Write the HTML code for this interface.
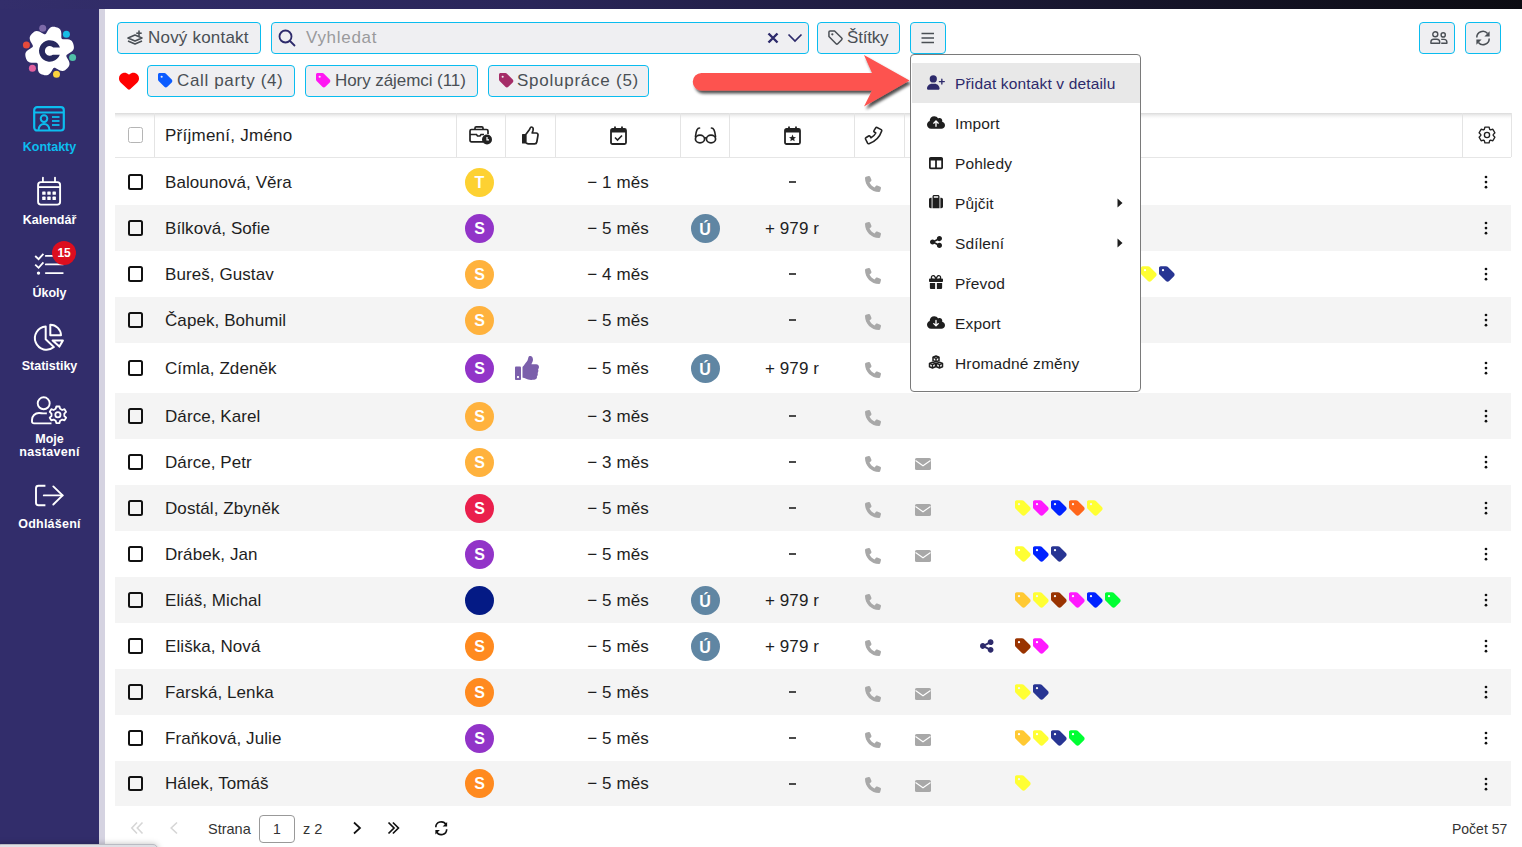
<!DOCTYPE html>
<html><head><meta charset="utf-8"><title>Kontakty</title>
<style>
html,body{margin:0;padding:0;}
body{width:1522px;height:847px;overflow:hidden;position:relative;background:#fff;font-family:"Liberation Sans", sans-serif;}
svg{overflow:visible}
</style></head><body>
<div style="position:absolute;left:0px;top:0px;width:1522px;height:9px;background:linear-gradient(to right,#332e6b 0%,#2a2659 35%,#16152a 75%,#0c0c12 100%)"></div><div style="position:absolute;left:0px;top:9px;width:99px;height:838px;background:#322d6b"></div><div style="position:absolute;left:99px;top:9px;width:6px;height:838px;background:#d5d3e1"></div><svg width="99" height="100" viewBox="0 0 99 100" style="position:absolute;left:0;top:0">
<path d="M72.40 51.00 L71.06 52.12 L69.49 53.09 L68.00 53.91 L66.87 54.67 L66.31 55.48 L66.39 56.46 L66.99 57.68 L67.87 59.14 L68.74 60.75 L69.35 62.40 L69.54 63.95 L69.30 65.31 L68.73 66.49 L67.95 67.52 L67.07 68.47 L66.12 69.35 L65.09 70.13 L63.91 70.70 L62.55 70.94 L61.00 70.75 L59.35 70.14 L57.74 69.27 L56.28 68.39 L55.06 67.79 L54.08 67.71 L53.27 68.27 L52.51 69.40 L51.69 70.89 L50.72 72.46 L49.60 73.80 L48.36 74.74 L47.05 75.22 L45.75 75.31 L44.47 75.15 L43.21 74.86 L41.97 74.48 L40.78 73.98 L39.69 73.25 L38.81 72.18 L38.20 70.75 L37.90 69.02 L37.84 67.18 L37.88 65.48 L37.79 64.12 L37.37 63.23 L36.48 62.81 L35.12 62.72 L33.42 62.76 L31.58 62.70 L29.85 62.40 L28.42 61.79 L27.35 60.91 L26.62 59.82 L26.12 58.63 L25.74 57.39 L25.45 56.13 L25.29 54.85 L25.38 53.55 L25.86 52.24 L26.80 51.00 L28.14 49.88 L29.71 48.91 L31.20 48.09 L32.33 47.33 L32.89 46.52 L32.81 45.54 L32.21 44.32 L31.33 42.86 L30.46 41.25 L29.85 39.60 L29.66 38.05 L29.90 36.69 L30.47 35.51 L31.25 34.48 L32.13 33.53 L33.08 32.65 L34.11 31.87 L35.29 31.30 L36.65 31.06 L38.20 31.25 L39.85 31.86 L41.46 32.73 L42.92 33.61 L44.14 34.21 L45.12 34.29 L45.93 33.73 L46.69 32.60 L47.51 31.11 L48.48 29.54 L49.60 28.20 L50.84 27.26 L52.15 26.78 L53.45 26.69 L54.73 26.85 L55.99 27.14 L57.23 27.52 L58.42 28.02 L59.51 28.75 L60.39 29.82 L61.00 31.25 L61.30 32.98 L61.36 34.82 L61.32 36.52 L61.41 37.88 L61.83 38.77 L62.72 39.19 L64.08 39.28 L65.78 39.24 L67.62 39.30 L69.35 39.60 L70.78 40.21 L71.85 41.09 L72.58 42.18 L73.08 43.37 L73.46 44.61 L73.75 45.87 L73.91 47.15 L73.82 48.45 L73.34 49.76Z" fill="#fff"/>
<circle cx="42.7" cy="28.2" r="3.5" fill="#7d6aa8"/>
<circle cx="66.4" cy="34.2" r="3.5" fill="#16bde6"/>
<circle cx="26.4" cy="44.9" r="3.5" fill="#e64a3b"/>
<circle cx="72.6" cy="57.6" r="3.5" fill="#4fbfa8"/>
<circle cx="32.4" cy="68.3" r="3.5" fill="#e0609e"/>
<circle cx="56.5" cy="74.3" r="3.5" fill="#fbd23e"/>
<path d="M59.96 47.6 A10.75 10.75 0 1 0 59.82 54.7 L52.82 54.7 A4.85 4.85 0 1 1 53.26 47.6 Z" fill="#27285e"/>
</svg><svg width="32" height="26" viewBox="0 0 32 26" style="position:absolute;left:33px;top:105.5px">
<rect x="1.2" y="1.2" width="29.6" height="23.3" rx="3" fill="none" stroke="#0cbdef" stroke-width="2.2"/>
<line x1="1.2" y1="6.5" x2="30.8" y2="6.5" stroke="#0cbdef" stroke-width="2"/>
<circle cx="11" cy="12.6" r="3.3" fill="none" stroke="#0cbdef" stroke-width="2"/>
<path d="M5.5 24 C6 19.5 8.5 18 11 18 C13.5 18 16 19.5 16.5 24" fill="none" stroke="#0cbdef" stroke-width="2"/>
<line x1="19" y1="11" x2="26.5" y2="11" stroke="#0cbdef" stroke-width="1.8"/>
<line x1="19" y1="15" x2="26.5" y2="15" stroke="#0cbdef" stroke-width="1.8"/>
<line x1="19" y1="19" x2="26.5" y2="19" stroke="#0cbdef" stroke-width="1.8"/>
</svg><div style="position:absolute;left:0px;top:141px;font-size:12.5px;line-height:1;color:#0cbdef;font-weight:bold;white-space:nowrap;width:99px;text-align:center">Kontakty</div><svg width="26" height="30" viewBox="0 0 26 30" style="position:absolute;left:36px;top:177px">
<rect x="2.1" y="5.1" width="22" height="22.5" rx="2.8" fill="none" stroke="#fff" stroke-width="1.9"/>
<line x1="2.1" y1="10.1" x2="24.1" y2="10.1" stroke="#fff" stroke-width="1.8"/>
<line x1="6.9" y1="0.6" x2="6.9" y2="5" stroke="#fff" stroke-width="1.8" stroke-linecap="round"/>
<line x1="19" y1="0.6" x2="19" y2="5" stroke="#fff" stroke-width="1.8" stroke-linecap="round"/>
<rect x="6.2" y="14.4" width="3.4" height="3.4" rx="0.6" fill="#fff"/><rect x="11.3" y="14.4" width="3.4" height="3.4" rx="0.6" fill="#fff"/><rect x="16.5" y="14.4" width="3.4" height="3.4" rx="0.6" fill="#fff"/><rect x="6.2" y="19.6" width="3.4" height="3.4" rx="0.6" fill="#fff"/><rect x="11.3" y="19.6" width="3.4" height="3.4" rx="0.6" fill="#fff"/><rect x="16.5" y="19.6" width="3.4" height="3.4" rx="0.6" fill="#fff"/>
</svg><div style="position:absolute;left:0px;top:214px;font-size:12.5px;line-height:1;color:#ffffff;font-weight:bold;white-space:nowrap;width:99px;text-align:center">Kalendář</div><svg width="30" height="24" viewBox="0 0 30 24" style="position:absolute;left:34px;top:252px">
<path d="M1.2 4 L4.6 7.2 L9.4 1.8" fill="none" stroke="#fff" stroke-width="1.8"/>
<path d="M1.2 12.6 L4.6 15.8 L9.4 10.4" fill="none" stroke="#fff" stroke-width="1.8"/>
<circle cx="4.5" cy="21.1" r="1.7" fill="#fff"/>
<line x1="11.8" y1="3.9" x2="28.8" y2="3.9" stroke="#fff" stroke-width="1.8" stroke-linecap="round"/>
<line x1="11.8" y1="12.4" x2="28.8" y2="12.4" stroke="#fff" stroke-width="1.8" stroke-linecap="round"/>
<line x1="11.8" y1="21.1" x2="28.8" y2="21.1" stroke="#fff" stroke-width="1.8" stroke-linecap="round"/>
</svg><div style="position:absolute;left:51.9px;top:241px;width:24px;height:24px;background:#dc0e1f;border-radius:50%"><div style="font-size:12px;line-height:24px;text-align:center;color:#fff;font-weight:bold;letter-spacing:-0.3px">15</div></div><div style="position:absolute;left:0px;top:287px;font-size:12.5px;line-height:1;color:#ffffff;font-weight:bold;white-space:nowrap;width:99px;text-align:center">Úkoly</div><svg width="30" height="30" viewBox="0 0 30 30" style="position:absolute;left:34px;top:323px">
<path d="M11.7 3.6 A11.6 11.6 0 1 0 19.9 24.1 L11.7 16.2 Z" fill="none" stroke="#fff" stroke-width="2" stroke-linejoin="round"/>
<path d="M16.3 1.8 V12.3 H27 A10.7 10.7 0 0 0 16.3 1.8 Z" fill="none" stroke="#fff" stroke-width="2" stroke-linejoin="round"/>
<path d="M18.6 17.4 H28.9 L25.4 23.6 Z" fill="none" stroke="#fff" stroke-width="2" stroke-linejoin="round"/>
</svg><div style="position:absolute;left:0px;top:360px;font-size:12.5px;line-height:1;color:#ffffff;font-weight:bold;white-space:nowrap;width:99px;text-align:center">Statistiky</div><svg width="36" height="28" viewBox="0 0 36 28" style="position:absolute;left:31px;top:397px">
<circle cx="12.7" cy="6.3" r="6" fill="none" stroke="#fff" stroke-width="1.9"/>
<path d="M20.5 26.4 H3 C1.8 26.4 1 25.6 1 24.4 V23 C1 19 4 16 8 16 C10.5 16 12.5 16.8 15.8 16.2" fill="none" stroke="#fff" stroke-width="1.9" stroke-linejoin="round"/>
<g transform="translate(26.9 17.8)">
<path d="M-1.6 -8.3 H1.6 L2.2 -6 L4.3 -4.8 L6.6 -5.6 L8.2 -2.9 L6.4 -1.2 V1.2 L8.2 2.9 L6.6 5.6 L4.3 4.8 L2.2 6 L1.6 8.3 H-1.6 L-2.2 6 L-4.3 4.8 L-6.6 5.6 L-8.2 2.9 L-6.4 1.2 V-1.2 L-8.2 -2.9 L-6.6 -5.6 L-4.3 -4.8 L-2.2 -6 Z" fill="none" stroke="#fff" stroke-width="1.8" stroke-linejoin="round"/>
<circle cx="0" cy="0" r="2.6" fill="none" stroke="#fff" stroke-width="1.8"/>
</g>
</svg><div style="position:absolute;left:0px;top:432.5px;font-size:12.5px;line-height:1;color:#ffffff;font-weight:bold;white-space:nowrap;width:99px;text-align:center">Moje</div><div style="position:absolute;left:0px;top:445.5px;font-size:12.5px;line-height:1;color:#ffffff;font-weight:bold;white-space:nowrap;width:99px;text-align:center;letter-spacing:0.3px">nastavení</div><svg width="30" height="24" viewBox="0 0 30 24" style="position:absolute;left:34px;top:484px">
<path d="M11.4 1.7 H4.5 C3 1.7 2 2.7 2 4.2 V18.7 C2 20.2 3 21.2 4.5 21.2 H11.4" fill="none" stroke="#fff" stroke-width="1.9"/>
<line x1="9.8" y1="11.4" x2="28.6" y2="11.4" stroke="#fff" stroke-width="1.9" stroke-linecap="round"/>
<path d="M19.3 2.4 L28.6 11.4 L19.3 20.5" fill="none" stroke="#fff" stroke-width="1.9" stroke-linecap="round" stroke-linejoin="round"/>
</svg><div style="position:absolute;left:0px;top:518px;font-size:12.5px;line-height:1;color:#ffffff;font-weight:bold;white-space:nowrap;width:99px;text-align:center;letter-spacing:0.25px">Odhlášení</div><div style="position:absolute;left:-4px;top:844px;width:160px;height:10px;background:#dfe0e5;border:1px solid #b9bbc2;border-radius:5px;box-shadow:0 0 6px rgba(0,0,0,.25)"></div><div style="position:absolute;left:117px;top:22px;width:144px;height:32px;box-sizing:border-box;border:1px solid #0abcef;background:#efeff2;border-radius:4px;"></div><svg width="16" height="16" viewBox="0 0 16 16" style="position:absolute;left:127px;top:30px">
<path d="M1 8 L8 5 L15 8 L8 11 Z" fill="none" stroke="#4a4f55" stroke-width="1.6" stroke-linejoin="round"/>
<path d="M1 11 L8 14 L15 11" fill="none" stroke="#4a4f55" stroke-width="1.6" stroke-linejoin="round"/>
<line x1="12" y1="0.5" x2="12" y2="6" stroke="#4a4f55" stroke-width="1.6"/><line x1="9.3" y1="3.2" x2="14.7" y2="3.2" stroke="#4a4f55" stroke-width="1.6"/>
</svg><div style="position:absolute;left:148px;top:29px;font-size:17px;line-height:1;color:#4a4f55;font-weight:normal;white-space:nowrap;letter-spacing:0.2px">Nový kontakt</div><div style="position:absolute;left:271px;top:22px;width:538px;height:32px;box-sizing:border-box;border:1px solid #0abcef;background:#efeff2;border-radius:4px;"></div><svg width="18" height="18" viewBox="0 0 18 18" style="position:absolute;left:278px;top:29px">
<circle cx="7.5" cy="7.5" r="6" fill="none" stroke="#2d2a6b" stroke-width="1.8"/>
<line x1="12" y1="12" x2="17" y2="17" stroke="#2d2a6b" stroke-width="1.8"/>
</svg><div style="position:absolute;left:306px;top:29px;font-size:17px;line-height:1;color:#9a9a9c;font-weight:normal;white-space:nowrap;letter-spacing:0.7px">Vyhledat</div><svg width="12" height="12" viewBox="0 0 12 12" style="position:absolute;left:767px;top:32px">
<path d="M1.5 1.5 L10.5 10.5 M10.5 1.5 L1.5 10.5" stroke="#2d2a6b" stroke-width="2.4"/>
</svg><svg width="16" height="10" viewBox="0 0 16 10" style="position:absolute;left:787px;top:33px">
<path d="M1.5 1.5 L8 8 L14.5 1.5" fill="none" stroke="#2d2a6b" stroke-width="1.7"/>
</svg><div style="position:absolute;left:817px;top:22px;width:83px;height:32px;box-sizing:border-box;border:1px solid #0abcef;background:#efeff2;border-radius:4px;"></div><svg width="15" height="15" viewBox="0 0 16 16" style="position:absolute;left:827.8px;top:30.2px">
<path d="M1 2.2 C1 1.5 1.5 1 2.2 1 H7 L14.6 8.6 C15.1 9.1 15.1 9.9 14.6 10.4 L10.4 14.6 C9.9 15.1 9.1 15.1 8.6 14.6 L1 7 Z" fill="none" stroke="#4a4f55" stroke-width="1.6" stroke-linejoin="round"/>
<circle cx="4.6" cy="4.6" r="1.2" fill="#4a4f55"/>
</svg><div style="position:absolute;left:847px;top:29px;font-size:17px;line-height:1;color:#4a4f55;font-weight:normal;white-space:nowrap;letter-spacing:-0.2px">Štítky</div><div style="position:absolute;left:910px;top:22px;width:36px;height:32px;box-sizing:border-box;border:1px solid #0abcef;background:#efeff2;border-radius:4px;"></div><svg width="14" height="12" viewBox="0 0 14 12" style="position:absolute;left:921px;top:31.5px">
<path d="M0.5 1.5 H13 M0.5 6 H13 M0.5 10.5 H13" stroke="#4a4f55" stroke-width="1.7"/>
</svg><div style="position:absolute;left:1419px;top:22px;width:36px;height:32px;box-sizing:border-box;border:1px solid #0abcef;background:#efeff2;border-radius:4px;"></div><svg width="18" height="14" viewBox="0 0 18 14" style="position:absolute;left:1429.5px;top:30.8px">
<circle cx="5.3" cy="3.3" r="2.5" fill="none" stroke="#4a4f55" stroke-width="1.4"/>
<path d="M0.9 12.3 V11 C0.9 9.4 2.1 8.2 3.7 8.2 H6.9 C8.5 8.2 9.7 9.4 9.7 11 V12.3 Z" fill="none" stroke="#4a4f55" stroke-width="1.4" stroke-linejoin="round"/>
<circle cx="13.2" cy="3.9" r="2.1" fill="none" stroke="#4a4f55" stroke-width="1.4"/>
<path d="M11.2 8.4 H14 C15.6 8.4 16.9 9.6 16.9 11.2 V12.3 H11.2" fill="none" stroke="#4a4f55" stroke-width="1.4" stroke-linejoin="round"/>
</svg><div style="position:absolute;left:1465px;top:22px;width:36px;height:32px;box-sizing:border-box;border:1px solid #0abcef;background:#efeff2;border-radius:4px;"></div><svg width="16" height="16" viewBox="0 0 16 16" style="position:absolute;left:1475px;top:29.8px">
<path d="M1.8 7.6 A6.1 6.1 0 0 1 12.6 3.6" fill="none" stroke="#4a4f55" stroke-width="1.5"/>
<path d="M14.2 8.4 A6.1 6.1 0 0 1 3.4 12.4" fill="none" stroke="#4a4f55" stroke-width="1.5"/>
<path d="M14.6 1.2 V6.4 H9.4 Z" fill="#4a4f55"/>
<path d="M1.4 14.8 V9.6 H6.6 Z" fill="#4a4f55"/>
</svg><div style="position:absolute;left:119px;top:71.3px"><svg width="20" height="20" viewBox="0 0 512 512" style="display:block" ><path d="M47.6 300.4L228.3 469.1c7.5 7 17.4 10.9 27.7 10.9s20.2-3.9 27.7-10.9L464.4 300.4c30.4-28.3 47.6-68 47.6-109.5v-5.8c0-69.9-50.5-129.5-119.4-141C347 36.5 300.6 51.4 268 84L256 96 244 84c-32.6-32.6-79-47.5-124.6-39.9C50.5 55.6 0 115.2 0 185.1v5.8c0 41.5 17.2 81.2 47.6 109.5z" fill="#ff0000"/></svg></div><div style="position:absolute;left:147px;top:65px;width:148px;height:32px;box-sizing:border-box;border:1px solid #0abcef;background:#efeff2;border-radius:4px;"></div><div style="position:absolute;left:158px;top:72.2px"><svg width="14.7" height="16.8" viewBox="0 0 448 512" style="display:block" ><path d="M0 80V229.5c0 17 6.7 33.3 18.7 45.3l176 176c25 25 65.5 25 90.5 0L418.7 317.3c25-25 25-65.5 0-90.5l-176-176c-12-12-28.3-18.7-45.3-18.7H48C21.5 32 0 53.5 0 80zm112 32a32 32 0 1 1 0 64 32 32 0 1 1 0-64z" fill="#0c5cff"/></svg></div><div style="position:absolute;left:177px;top:72px;font-size:17px;line-height:1;color:#4a4f55;font-weight:normal;white-space:nowrap;letter-spacing:0.65px">Call party (4)</div><div style="position:absolute;left:305px;top:65px;width:173px;height:32px;box-sizing:border-box;border:1px solid #0abcef;background:#efeff2;border-radius:4px;"></div><div style="position:absolute;left:316px;top:72.2px"><svg width="14.7" height="16.8" viewBox="0 0 448 512" style="display:block" ><path d="M0 80V229.5c0 17 6.7 33.3 18.7 45.3l176 176c25 25 65.5 25 90.5 0L418.7 317.3c25-25 25-65.5 0-90.5l-176-176c-12-12-28.3-18.7-45.3-18.7H48C21.5 32 0 53.5 0 80zm112 32a32 32 0 1 1 0 64 32 32 0 1 1 0-64z" fill="#ff17f2"/></svg></div><div style="position:absolute;left:335px;top:72px;font-size:17px;line-height:1;color:#4a4f55;font-weight:normal;white-space:nowrap;letter-spacing:-0.07px">Hory zájemci (11)</div><div style="position:absolute;left:488px;top:65px;width:161px;height:32px;box-sizing:border-box;border:1px solid #0abcef;background:#efeff2;border-radius:4px;"></div><div style="position:absolute;left:499px;top:72.2px"><svg width="14.7" height="16.8" viewBox="0 0 448 512" style="display:block" ><path d="M0 80V229.5c0 17 6.7 33.3 18.7 45.3l176 176c25 25 65.5 25 90.5 0L418.7 317.3c25-25 25-65.5 0-90.5l-176-176c-12-12-28.3-18.7-45.3-18.7H48C21.5 32 0 53.5 0 80zm112 32a32 32 0 1 1 0 64 32 32 0 1 1 0-64z" fill="#a52d68"/></svg></div><div style="position:absolute;left:517px;top:72px;font-size:17px;line-height:1;color:#4a4f55;font-weight:normal;white-space:nowrap;letter-spacing:0.75px">Spolupráce (5)</div><div style="position:absolute;left:115px;top:113px;width:1396px;height:44px;background:linear-gradient(to bottom,#dadada 0px,#ececec 2px,#f8f8f8 4px,#fff 6px)"></div><div style="position:absolute;left:115px;top:156.8px;width:1396px;height:1.5px;background:#e6e6e6"></div><div style="position:absolute;left:154px;top:113px;width:1px;height:44px;background:#e4e4e4"></div><div style="position:absolute;left:456px;top:113px;width:1px;height:44px;background:#e4e4e4"></div><div style="position:absolute;left:505px;top:113px;width:1px;height:44px;background:#e4e4e4"></div><div style="position:absolute;left:555px;top:113px;width:1px;height:44px;background:#e4e4e4"></div><div style="position:absolute;left:680px;top:113px;width:1px;height:44px;background:#e4e4e4"></div><div style="position:absolute;left:729px;top:113px;width:1px;height:44px;background:#e4e4e4"></div><div style="position:absolute;left:854px;top:113px;width:1px;height:44px;background:#e4e4e4"></div><div style="position:absolute;left:904px;top:113px;width:1px;height:44px;background:#e4e4e4"></div><div style="position:absolute;left:1462px;top:113px;width:1px;height:44px;background:#e4e4e4"></div><div style="position:absolute;left:1511px;top:113px;width:1px;height:44px;background:#e4e4e4"></div><div style="position:absolute;left:127.5px;top:127px;width:15.5px;height:15.5px;box-sizing:border-box;border:1px solid #b5b5b5;border-radius:2.5px;background:#fff"></div><div style="position:absolute;left:165px;top:127px;font-size:17px;line-height:1;color:#1e1e1e;font-weight:normal;white-space:nowrap;letter-spacing:0.25px">Příjmení, Jméno</div><svg width="24" height="19" viewBox="0 0 24 19" style="position:absolute;left:469px;top:126px">
<path d="M6 3.5 V2 C6 1.3 6.5 0.8 7.2 0.8 H12.8 C13.5 0.8 14 1.3 14 2 V3.5" fill="none" stroke="#222" stroke-width="1.7"/>
<path d="M14 15.8 H2.5 C1.6 15.8 1 15.2 1 14.3 V5 C1 4.1 1.6 3.5 2.5 3.5 H17.5 C18.4 3.5 19 4.1 19 5 V8" fill="none" stroke="#222" stroke-width="1.7"/>
<path d="M1 8.5 H7.5 L8.5 10 H11 L12 8.5 H15" fill="none" stroke="#222" stroke-width="1.6"/>
<circle cx="18" cy="13.5" r="5" fill="#222"/>
<path d="M18 11 V13.8 H20" fill="none" stroke="#fff" stroke-width="1.2"/>
</svg><svg width="18" height="19" viewBox="0 0 18 19" style="position:absolute;left:521px;top:126px">
<rect x="1" y="8" width="3.2" height="9.5" fill="#222" rx="0.5"/>
<path d="M4.8 8.5 L8.5 3.5 C9 2.5 9.2 1 10.5 1 C12 1 12.5 2.5 12 4.5 L11.2 7 H15.3 C16.5 7 17.2 8 17 9.2 L15.8 16 C15.6 17.2 14.8 17.8 13.6 17.8 H7.5 C6.2 17.8 5.5 17.2 4.8 16.8 Z" fill="none" stroke="#222" stroke-width="1.7" stroke-linejoin="round"/>
</svg><svg width="17" height="19" viewBox="0 0 17 19" style="position:absolute;left:609.5px;top:125.5px">
<rect x="1" y="3" width="15" height="15" rx="1.5" fill="none" stroke="#222" stroke-width="1.8"/>
<rect x="1" y="3" width="15" height="3.5" fill="#222"/>
<line x1="5" y1="0.5" x2="5" y2="4" stroke="#222" stroke-width="1.8"/>
<line x1="12" y1="0.5" x2="12" y2="4" stroke="#222" stroke-width="1.8"/>
<path d="M5 11.5 L7.5 14 L12 9.5" fill="none" stroke="#222" stroke-width="1.6"/>
</svg><svg width="17" height="19" viewBox="0 0 17 19" style="position:absolute;left:784px;top:125.5px">
<rect x="1" y="3" width="15" height="15" rx="1.5" fill="none" stroke="#222" stroke-width="1.8"/>
<rect x="1" y="3" width="15" height="3.5" fill="#222"/>
<line x1="5" y1="0.5" x2="5" y2="4" stroke="#222" stroke-width="1.8"/>
<line x1="12" y1="0.5" x2="12" y2="4" stroke="#222" stroke-width="1.8"/>
<path d="M8.5 8.5 L9.5 11 L12 11.2 L10.1 12.8 L10.7 15.3 L8.5 14 L6.3 15.3 L6.9 12.8 L5 11.2 L7.5 11 Z" fill="#222"/>
</svg><svg width="23" height="17" viewBox="0 0 23 17" style="position:absolute;left:694px;top:127px">
<path d="M5.5 1 C3 1 2 4 1.5 9.5" fill="none" stroke="#222" stroke-width="1.7" stroke-linecap="round"/>
<path d="M17.5 1 C20 1 21 4 21.5 9.5" fill="none" stroke="#222" stroke-width="1.7" stroke-linecap="round"/>
<ellipse cx="6" cy="12" rx="4.6" ry="3.8" fill="none" stroke="#222" stroke-width="1.7"/>
<ellipse cx="17" cy="12" rx="4.6" ry="3.8" fill="none" stroke="#222" stroke-width="1.7"/>
<path d="M10.6 11.5 C11 10.5 12 10.5 12.4 11.5" fill="none" stroke="#222" stroke-width="1.5"/>
</svg><svg width="19" height="19" viewBox="0 0 19 19" style="position:absolute;left:864px;top:125.5px">
<path d="M13 1.5 L17.2 3.6 C17.7 3.9 17.9 4.5 17.7 5 C15.5 11.5 11.5 15.5 5 17.7 C4.5 17.9 3.9 17.7 3.6 17.2 L1.5 13 C1.3 12.5 1.4 12 1.9 11.7 L4.6 10 C5.1 9.7 5.7 9.8 6 10.3 L7 11.8 C9.5 10.5 10.5 9.5 11.8 7 L10.3 6 C9.8 5.7 9.7 5.1 10 4.6 L11.7 1.9 C12 1.4 12.5 1.3 13 1.5 Z" fill="none" stroke="#222" stroke-width="1.6" stroke-linejoin="round"/>
</svg><svg width="19" height="19" viewBox="0 0 19 19" style="position:absolute;left:1477.5px;top:126px">
<path d="M15.19 9.39 L16.90 11.21 L14.86 14.74 L12.43 14.16 L11.76 14.55 L11.04 16.94 L6.96 16.94 L6.24 14.55 L5.57 14.16 L3.14 14.74 L1.10 11.21 L2.81 9.39 L2.81 8.61 L1.10 6.79 L3.14 3.26 L5.57 3.84 L6.24 3.45 L6.96 1.06 L11.04 1.06 L11.76 3.45 L12.43 3.84 L14.86 3.26 L16.90 6.79 L15.19 8.61Z" fill="none" stroke="#222" stroke-width="1.35" stroke-linejoin="round"/>
<circle cx="9.0" cy="9.0" r="2.6" fill="none" stroke="#222" stroke-width="1.35"/>
</svg><div style="position:absolute;left:115px;top:158.5px;width:1396px;height:46.5px;background:#ffffff"></div><div style="position:absolute;left:127.5px;top:174.3px;width:15.5px;height:15.5px;box-sizing:border-box;border:2px solid #111;border-radius:2.5px"></div><div style="position:absolute;left:165px;top:173.5px;font-size:17px;line-height:1;color:#1e1e1e;font-weight:normal;white-space:nowrap;letter-spacing:0.08px">Balounová, Věra</div><div style="position:absolute;left:465px;top:167.5px;width:29px;height:29px;background:#fdd132;border-radius:50%"><div style="font-size:16px;line-height:29px;text-align:center;color:#fff;font-weight:bold">T</div></div><div style="position:absolute;left:586px;top:173.5px;font-size:17px;line-height:1;color:#1e1e1e;font-weight:normal;white-space:nowrap;width:64px;text-align:center;letter-spacing:0.1px">− 1 měs</div><div style="position:absolute;left:789px;top:181px;width:6.6px;height:2px;background:#4a4a4a"></div><div style="position:absolute;left:865px;top:175.5px"><svg width="16" height="16" viewBox="0 0 512 512" style="display:block" ><path d="M164.9 24.6c-7.7-18.6-28-28.5-47.4-23.2l-88 24C12.1 30.2 0 46 0 64C0 311.4 200.6 512 448 512c18 0 33.8-12.1 38.6-29.5l24-88c5.3-19.4-4.6-39.7-23.2-47.4l-96-40c-16.3-6.8-35.2-2.1-46.3 11.6L304.7 368C234.3 334.7 177.3 277.7 144 207.3L193.3 167c13.7-11.2 18.4-30 11.6-46.3l-40-96z" fill="#a8a8a8"/></svg></div><svg width="4" height="14" viewBox="0 0 4 14" style="position:absolute;left:1484px;top:175px">
<circle cx="2" cy="2" r="1.35" fill="#111"/><circle cx="2" cy="7.1" r="1.35" fill="#111"/><circle cx="2" cy="12.2" r="1.35" fill="#111"/></svg><div style="position:absolute;left:115px;top:205px;width:1396px;height:46px;background:#f4f4f4"></div><div style="position:absolute;left:127.5px;top:220.3px;width:15.5px;height:15.5px;box-sizing:border-box;border:2px solid #111;border-radius:2.5px"></div><div style="position:absolute;left:165px;top:219.5px;font-size:17px;line-height:1;color:#1e1e1e;font-weight:normal;white-space:nowrap;letter-spacing:0.08px">Bílková, Sofie</div><div style="position:absolute;left:465px;top:213.5px;width:29px;height:29px;background:#9234c8;border-radius:50%"><div style="font-size:16px;line-height:29px;text-align:center;color:#fff;font-weight:bold">S</div></div><div style="position:absolute;left:586px;top:219.5px;font-size:17px;line-height:1;color:#1e1e1e;font-weight:normal;white-space:nowrap;width:64px;text-align:center;letter-spacing:0.1px">− 5 měs</div><div style="position:absolute;left:690.5px;top:213.5px;width:29px;height:29px;background:#6086a3;border-radius:50%"><div style="font-size:16px;line-height:31px;text-align:center;color:#fff;font-weight:bold">Ú</div></div><div style="position:absolute;left:752px;top:219.5px;font-size:17px;line-height:1;color:#1e1e1e;font-weight:normal;white-space:nowrap;width:80px;text-align:center;letter-spacing:0.1px">+ 979 r</div><div style="position:absolute;left:865px;top:221.5px"><svg width="16" height="16" viewBox="0 0 512 512" style="display:block" ><path d="M164.9 24.6c-7.7-18.6-28-28.5-47.4-23.2l-88 24C12.1 30.2 0 46 0 64C0 311.4 200.6 512 448 512c18 0 33.8-12.1 38.6-29.5l24-88c5.3-19.4-4.6-39.7-23.2-47.4l-96-40c-16.3-6.8-35.2-2.1-46.3 11.6L304.7 368C234.3 334.7 177.3 277.7 144 207.3L193.3 167c13.7-11.2 18.4-30 11.6-46.3l-40-96z" fill="#a8a8a8"/></svg></div><svg width="4" height="14" viewBox="0 0 4 14" style="position:absolute;left:1484px;top:221.0px">
<circle cx="2" cy="2" r="1.35" fill="#111"/><circle cx="2" cy="7.1" r="1.35" fill="#111"/><circle cx="2" cy="12.2" r="1.35" fill="#111"/></svg><div style="position:absolute;left:115px;top:251px;width:1396px;height:46px;background:#ffffff"></div><div style="position:absolute;left:127.5px;top:266.3px;width:15.5px;height:15.5px;box-sizing:border-box;border:2px solid #111;border-radius:2.5px"></div><div style="position:absolute;left:165px;top:265.5px;font-size:17px;line-height:1;color:#1e1e1e;font-weight:normal;white-space:nowrap;letter-spacing:0.08px">Bureš, Gustav</div><div style="position:absolute;left:465px;top:259.5px;width:29px;height:29px;background:#ffb23d;border-radius:50%"><div style="font-size:16px;line-height:29px;text-align:center;color:#fff;font-weight:bold">S</div></div><div style="position:absolute;left:586px;top:265.5px;font-size:17px;line-height:1;color:#1e1e1e;font-weight:normal;white-space:nowrap;width:64px;text-align:center;letter-spacing:0.1px">− 4 měs</div><div style="position:absolute;left:789px;top:273px;width:6.6px;height:2px;background:#4a4a4a"></div><div style="position:absolute;left:865px;top:267.5px"><svg width="16" height="16" viewBox="0 0 512 512" style="display:block" ><path d="M164.9 24.6c-7.7-18.6-28-28.5-47.4-23.2l-88 24C12.1 30.2 0 46 0 64C0 311.4 200.6 512 448 512c18 0 33.8-12.1 38.6-29.5l24-88c5.3-19.4-4.6-39.7-23.2-47.4l-96-40c-16.3-6.8-35.2-2.1-46.3 11.6L304.7 368C234.3 334.7 177.3 277.7 144 207.3L193.3 167c13.7-11.2 18.4-30 11.6-46.3l-40-96z" fill="#a8a8a8"/></svg></div><div style="position:absolute;left:1141.1499999999999px;top:264.7px"><svg width="16" height="18.3" viewBox="0 0 448 512" style="display:block" ><path d="M0 80V229.5c0 17 6.7 33.3 18.7 45.3l176 176c25 25 65.5 25 90.5 0L418.7 317.3c25-25 25-65.5 0-90.5l-176-176c-12-12-28.3-18.7-45.3-18.7H48C21.5 32 0 53.5 0 80zm112 32a32 32 0 1 1 0 64 32 32 0 1 1 0-64z" fill="#ffff33"/></svg></div><div style="position:absolute;left:1159.2px;top:264.7px"><svg width="16" height="18.3" viewBox="0 0 448 512" style="display:block" ><path d="M0 80V229.5c0 17 6.7 33.3 18.7 45.3l176 176c25 25 65.5 25 90.5 0L418.7 317.3c25-25 25-65.5 0-90.5l-176-176c-12-12-28.3-18.7-45.3-18.7H48C21.5 32 0 53.5 0 80zm112 32a32 32 0 1 1 0 64 32 32 0 1 1 0-64z" fill="#283593"/></svg></div><svg width="4" height="14" viewBox="0 0 4 14" style="position:absolute;left:1484px;top:267.0px">
<circle cx="2" cy="2" r="1.35" fill="#111"/><circle cx="2" cy="7.1" r="1.35" fill="#111"/><circle cx="2" cy="12.2" r="1.35" fill="#111"/></svg><div style="position:absolute;left:115px;top:297px;width:1396px;height:46px;background:#f4f4f4"></div><div style="position:absolute;left:127.5px;top:312.3px;width:15.5px;height:15.5px;box-sizing:border-box;border:2px solid #111;border-radius:2.5px"></div><div style="position:absolute;left:165px;top:311.5px;font-size:17px;line-height:1;color:#1e1e1e;font-weight:normal;white-space:nowrap;letter-spacing:0.08px">Čapek, Bohumil</div><div style="position:absolute;left:465px;top:305.5px;width:29px;height:29px;background:#ffb23d;border-radius:50%"><div style="font-size:16px;line-height:29px;text-align:center;color:#fff;font-weight:bold">S</div></div><div style="position:absolute;left:586px;top:311.5px;font-size:17px;line-height:1;color:#1e1e1e;font-weight:normal;white-space:nowrap;width:64px;text-align:center;letter-spacing:0.1px">− 5 měs</div><div style="position:absolute;left:789px;top:319px;width:6.6px;height:2px;background:#4a4a4a"></div><div style="position:absolute;left:865px;top:313.5px"><svg width="16" height="16" viewBox="0 0 512 512" style="display:block" ><path d="M164.9 24.6c-7.7-18.6-28-28.5-47.4-23.2l-88 24C12.1 30.2 0 46 0 64C0 311.4 200.6 512 448 512c18 0 33.8-12.1 38.6-29.5l24-88c5.3-19.4-4.6-39.7-23.2-47.4l-96-40c-16.3-6.8-35.2-2.1-46.3 11.6L304.7 368C234.3 334.7 177.3 277.7 144 207.3L193.3 167c13.7-11.2 18.4-30 11.6-46.3l-40-96z" fill="#a8a8a8"/></svg></div><svg width="4" height="14" viewBox="0 0 4 14" style="position:absolute;left:1484px;top:313.0px">
<circle cx="2" cy="2" r="1.35" fill="#111"/><circle cx="2" cy="7.1" r="1.35" fill="#111"/><circle cx="2" cy="12.2" r="1.35" fill="#111"/></svg><div style="position:absolute;left:115px;top:343px;width:1396px;height:50px;background:#ffffff"></div><div style="position:absolute;left:127.5px;top:360.3px;width:15.5px;height:15.5px;box-sizing:border-box;border:2px solid #111;border-radius:2.5px"></div><div style="position:absolute;left:165px;top:359.5px;font-size:17px;line-height:1;color:#1e1e1e;font-weight:normal;white-space:nowrap;letter-spacing:0.08px">Címla, Zdeněk</div><div style="position:absolute;left:465px;top:353.5px;width:29px;height:29px;background:#9234c8;border-radius:50%"><div style="font-size:16px;line-height:29px;text-align:center;color:#fff;font-weight:bold">S</div></div><div style="position:absolute;left:514.5px;top:355.5px"><svg width="24" height="24" viewBox="0 0 512 512" style="display:block" ><path d="M104 224H24c-13.255 0-24 10.745-24 24v240c0 13.255 10.745 24 24 24h80c13.255 0 24-10.745 24-24V248c0-13.255-10.745-24-24-24zM64 472c-13.255 0-24-10.745-24-24s10.745-24 24-24 24 10.745 24 24-10.745 24-24 24zM384 81.452c0 42.416-25.97 66.208-33.277 94.548h101.723c33.397 0 59.397 27.746 59.553 58.098.084 17.938-7.546 37.249-19.439 49.197l-.11.11c9.836 23.337 8.237 56.037-9.308 79.469 8.681 25.895-.069 57.704-16.382 74.757 4.298 17.598 2.244 32.575-6.148 44.632C440.202 511.587 389.616 512 346.839 512l-2.845-.001c-48.287-.017-87.806-17.598-119.56-31.725-15.957-7.099-36.821-15.887-52.651-16.178-6.54-.12-11.783-5.457-11.783-11.998v-213.77c0-3.2 1.282-6.271 3.558-8.521 39.614-39.144 56.648-80.587 89.117-113.111 14.804-14.832 20.188-37.236 25.393-58.902C282.515 39.293 291.817 0 312 0c24 0 72 8 72 81.452z" fill="#7b5fab"/></svg></div><div style="position:absolute;left:586px;top:359.5px;font-size:17px;line-height:1;color:#1e1e1e;font-weight:normal;white-space:nowrap;width:64px;text-align:center;letter-spacing:0.1px">− 5 měs</div><div style="position:absolute;left:690.5px;top:353.5px;width:29px;height:29px;background:#6086a3;border-radius:50%"><div style="font-size:16px;line-height:31px;text-align:center;color:#fff;font-weight:bold">Ú</div></div><div style="position:absolute;left:752px;top:359.5px;font-size:17px;line-height:1;color:#1e1e1e;font-weight:normal;white-space:nowrap;width:80px;text-align:center;letter-spacing:0.1px">+ 979 r</div><div style="position:absolute;left:865px;top:361.5px"><svg width="16" height="16" viewBox="0 0 512 512" style="display:block" ><path d="M164.9 24.6c-7.7-18.6-28-28.5-47.4-23.2l-88 24C12.1 30.2 0 46 0 64C0 311.4 200.6 512 448 512c18 0 33.8-12.1 38.6-29.5l24-88c5.3-19.4-4.6-39.7-23.2-47.4l-96-40c-16.3-6.8-35.2-2.1-46.3 11.6L304.7 368C234.3 334.7 177.3 277.7 144 207.3L193.3 167c13.7-11.2 18.4-30 11.6-46.3l-40-96z" fill="#a8a8a8"/></svg></div><svg width="4" height="14" viewBox="0 0 4 14" style="position:absolute;left:1484px;top:361.0px">
<circle cx="2" cy="2" r="1.35" fill="#111"/><circle cx="2" cy="7.1" r="1.35" fill="#111"/><circle cx="2" cy="12.2" r="1.35" fill="#111"/></svg><div style="position:absolute;left:115px;top:393px;width:1396px;height:46px;background:#f4f4f4"></div><div style="position:absolute;left:127.5px;top:408.3px;width:15.5px;height:15.5px;box-sizing:border-box;border:2px solid #111;border-radius:2.5px"></div><div style="position:absolute;left:165px;top:407.5px;font-size:17px;line-height:1;color:#1e1e1e;font-weight:normal;white-space:nowrap;letter-spacing:0.08px">Dárce, Karel</div><div style="position:absolute;left:465px;top:401.5px;width:29px;height:29px;background:#ffb23d;border-radius:50%"><div style="font-size:16px;line-height:29px;text-align:center;color:#fff;font-weight:bold">S</div></div><div style="position:absolute;left:586px;top:407.5px;font-size:17px;line-height:1;color:#1e1e1e;font-weight:normal;white-space:nowrap;width:64px;text-align:center;letter-spacing:0.1px">− 3 měs</div><div style="position:absolute;left:789px;top:415px;width:6.6px;height:2px;background:#4a4a4a"></div><div style="position:absolute;left:865px;top:409.5px"><svg width="16" height="16" viewBox="0 0 512 512" style="display:block" ><path d="M164.9 24.6c-7.7-18.6-28-28.5-47.4-23.2l-88 24C12.1 30.2 0 46 0 64C0 311.4 200.6 512 448 512c18 0 33.8-12.1 38.6-29.5l24-88c5.3-19.4-4.6-39.7-23.2-47.4l-96-40c-16.3-6.8-35.2-2.1-46.3 11.6L304.7 368C234.3 334.7 177.3 277.7 144 207.3L193.3 167c13.7-11.2 18.4-30 11.6-46.3l-40-96z" fill="#a8a8a8"/></svg></div><svg width="4" height="14" viewBox="0 0 4 14" style="position:absolute;left:1484px;top:409.0px">
<circle cx="2" cy="2" r="1.35" fill="#111"/><circle cx="2" cy="7.1" r="1.35" fill="#111"/><circle cx="2" cy="12.2" r="1.35" fill="#111"/></svg><div style="position:absolute;left:115px;top:439px;width:1396px;height:46px;background:#ffffff"></div><div style="position:absolute;left:127.5px;top:454.3px;width:15.5px;height:15.5px;box-sizing:border-box;border:2px solid #111;border-radius:2.5px"></div><div style="position:absolute;left:165px;top:453.5px;font-size:17px;line-height:1;color:#1e1e1e;font-weight:normal;white-space:nowrap;letter-spacing:0.08px">Dárce, Petr</div><div style="position:absolute;left:465px;top:447.5px;width:29px;height:29px;background:#ffb23d;border-radius:50%"><div style="font-size:16px;line-height:29px;text-align:center;color:#fff;font-weight:bold">S</div></div><div style="position:absolute;left:586px;top:453.5px;font-size:17px;line-height:1;color:#1e1e1e;font-weight:normal;white-space:nowrap;width:64px;text-align:center;letter-spacing:0.1px">− 3 měs</div><div style="position:absolute;left:789px;top:461px;width:6.6px;height:2px;background:#4a4a4a"></div><div style="position:absolute;left:865px;top:455.5px"><svg width="16" height="16" viewBox="0 0 512 512" style="display:block" ><path d="M164.9 24.6c-7.7-18.6-28-28.5-47.4-23.2l-88 24C12.1 30.2 0 46 0 64C0 311.4 200.6 512 448 512c18 0 33.8-12.1 38.6-29.5l24-88c5.3-19.4-4.6-39.7-23.2-47.4l-96-40c-16.3-6.8-35.2-2.1-46.3 11.6L304.7 368C234.3 334.7 177.3 277.7 144 207.3L193.3 167c13.7-11.2 18.4-30 11.6-46.3l-40-96z" fill="#a8a8a8"/></svg></div><svg width="16" height="12" viewBox="0 0 16 12" style="position:absolute;left:915px;top:458.0px">
<rect x="0" y="0" width="16" height="12" rx="1.6" fill="#a8a8a8"/><path d="M0.5 2.5 L8 7.8 L15.5 2.5" fill="none" stroke="#fff" stroke-width="1.1"/></svg><svg width="4" height="14" viewBox="0 0 4 14" style="position:absolute;left:1484px;top:455.0px">
<circle cx="2" cy="2" r="1.35" fill="#111"/><circle cx="2" cy="7.1" r="1.35" fill="#111"/><circle cx="2" cy="12.2" r="1.35" fill="#111"/></svg><div style="position:absolute;left:115px;top:485px;width:1396px;height:46px;background:#f4f4f4"></div><div style="position:absolute;left:127.5px;top:500.3px;width:15.5px;height:15.5px;box-sizing:border-box;border:2px solid #111;border-radius:2.5px"></div><div style="position:absolute;left:165px;top:499.5px;font-size:17px;line-height:1;color:#1e1e1e;font-weight:normal;white-space:nowrap;letter-spacing:0.08px">Dostál, Zbyněk</div><div style="position:absolute;left:465px;top:493.5px;width:29px;height:29px;background:#ea1f4c;border-radius:50%"><div style="font-size:16px;line-height:29px;text-align:center;color:#fff;font-weight:bold">S</div></div><div style="position:absolute;left:586px;top:499.5px;font-size:17px;line-height:1;color:#1e1e1e;font-weight:normal;white-space:nowrap;width:64px;text-align:center;letter-spacing:0.1px">− 5 měs</div><div style="position:absolute;left:789px;top:507px;width:6.6px;height:2px;background:#4a4a4a"></div><div style="position:absolute;left:865px;top:501.5px"><svg width="16" height="16" viewBox="0 0 512 512" style="display:block" ><path d="M164.9 24.6c-7.7-18.6-28-28.5-47.4-23.2l-88 24C12.1 30.2 0 46 0 64C0 311.4 200.6 512 448 512c18 0 33.8-12.1 38.6-29.5l24-88c5.3-19.4-4.6-39.7-23.2-47.4l-96-40c-16.3-6.8-35.2-2.1-46.3 11.6L304.7 368C234.3 334.7 177.3 277.7 144 207.3L193.3 167c13.7-11.2 18.4-30 11.6-46.3l-40-96z" fill="#a8a8a8"/></svg></div><svg width="16" height="12" viewBox="0 0 16 12" style="position:absolute;left:915px;top:504.0px">
<rect x="0" y="0" width="16" height="12" rx="1.6" fill="#a8a8a8"/><path d="M0.5 2.5 L8 7.8 L15.5 2.5" fill="none" stroke="#fff" stroke-width="1.1"/></svg><div style="position:absolute;left:1014.8px;top:498.7px"><svg width="16" height="18.3" viewBox="0 0 448 512" style="display:block" ><path d="M0 80V229.5c0 17 6.7 33.3 18.7 45.3l176 176c25 25 65.5 25 90.5 0L418.7 317.3c25-25 25-65.5 0-90.5l-176-176c-12-12-28.3-18.7-45.3-18.7H48C21.5 32 0 53.5 0 80zm112 32a32 32 0 1 1 0 64 32 32 0 1 1 0-64z" fill="#ffff33"/></svg></div><div style="position:absolute;left:1032.85px;top:498.7px"><svg width="16" height="18.3" viewBox="0 0 448 512" style="display:block" ><path d="M0 80V229.5c0 17 6.7 33.3 18.7 45.3l176 176c25 25 65.5 25 90.5 0L418.7 317.3c25-25 25-65.5 0-90.5l-176-176c-12-12-28.3-18.7-45.3-18.7H48C21.5 32 0 53.5 0 80zm112 32a32 32 0 1 1 0 64 32 32 0 1 1 0-64z" fill="#ff19ff"/></svg></div><div style="position:absolute;left:1050.8999999999999px;top:498.7px"><svg width="16" height="18.3" viewBox="0 0 448 512" style="display:block" ><path d="M0 80V229.5c0 17 6.7 33.3 18.7 45.3l176 176c25 25 65.5 25 90.5 0L418.7 317.3c25-25 25-65.5 0-90.5l-176-176c-12-12-28.3-18.7-45.3-18.7H48C21.5 32 0 53.5 0 80zm112 32a32 32 0 1 1 0 64 32 32 0 1 1 0-64z" fill="#0022ff"/></svg></div><div style="position:absolute;left:1068.95px;top:498.7px"><svg width="16" height="18.3" viewBox="0 0 448 512" style="display:block" ><path d="M0 80V229.5c0 17 6.7 33.3 18.7 45.3l176 176c25 25 65.5 25 90.5 0L418.7 317.3c25-25 25-65.5 0-90.5l-176-176c-12-12-28.3-18.7-45.3-18.7H48C21.5 32 0 53.5 0 80zm112 32a32 32 0 1 1 0 64 32 32 0 1 1 0-64z" fill="#ff661a"/></svg></div><div style="position:absolute;left:1087.0px;top:498.7px"><svg width="16" height="18.3" viewBox="0 0 448 512" style="display:block" ><path d="M0 80V229.5c0 17 6.7 33.3 18.7 45.3l176 176c25 25 65.5 25 90.5 0L418.7 317.3c25-25 25-65.5 0-90.5l-176-176c-12-12-28.3-18.7-45.3-18.7H48C21.5 32 0 53.5 0 80zm112 32a32 32 0 1 1 0 64 32 32 0 1 1 0-64z" fill="#ffff33"/></svg></div><svg width="4" height="14" viewBox="0 0 4 14" style="position:absolute;left:1484px;top:501.0px">
<circle cx="2" cy="2" r="1.35" fill="#111"/><circle cx="2" cy="7.1" r="1.35" fill="#111"/><circle cx="2" cy="12.2" r="1.35" fill="#111"/></svg><div style="position:absolute;left:115px;top:531px;width:1396px;height:46px;background:#ffffff"></div><div style="position:absolute;left:127.5px;top:546.3px;width:15.5px;height:15.5px;box-sizing:border-box;border:2px solid #111;border-radius:2.5px"></div><div style="position:absolute;left:165px;top:545.5px;font-size:17px;line-height:1;color:#1e1e1e;font-weight:normal;white-space:nowrap;letter-spacing:0.08px">Drábek, Jan</div><div style="position:absolute;left:465px;top:539.5px;width:29px;height:29px;background:#9234c8;border-radius:50%"><div style="font-size:16px;line-height:29px;text-align:center;color:#fff;font-weight:bold">S</div></div><div style="position:absolute;left:586px;top:545.5px;font-size:17px;line-height:1;color:#1e1e1e;font-weight:normal;white-space:nowrap;width:64px;text-align:center;letter-spacing:0.1px">− 5 měs</div><div style="position:absolute;left:789px;top:553px;width:6.6px;height:2px;background:#4a4a4a"></div><div style="position:absolute;left:865px;top:547.5px"><svg width="16" height="16" viewBox="0 0 512 512" style="display:block" ><path d="M164.9 24.6c-7.7-18.6-28-28.5-47.4-23.2l-88 24C12.1 30.2 0 46 0 64C0 311.4 200.6 512 448 512c18 0 33.8-12.1 38.6-29.5l24-88c5.3-19.4-4.6-39.7-23.2-47.4l-96-40c-16.3-6.8-35.2-2.1-46.3 11.6L304.7 368C234.3 334.7 177.3 277.7 144 207.3L193.3 167c13.7-11.2 18.4-30 11.6-46.3l-40-96z" fill="#a8a8a8"/></svg></div><svg width="16" height="12" viewBox="0 0 16 12" style="position:absolute;left:915px;top:550.0px">
<rect x="0" y="0" width="16" height="12" rx="1.6" fill="#a8a8a8"/><path d="M0.5 2.5 L8 7.8 L15.5 2.5" fill="none" stroke="#fff" stroke-width="1.1"/></svg><div style="position:absolute;left:1014.8px;top:544.7px"><svg width="16" height="18.3" viewBox="0 0 448 512" style="display:block" ><path d="M0 80V229.5c0 17 6.7 33.3 18.7 45.3l176 176c25 25 65.5 25 90.5 0L418.7 317.3c25-25 25-65.5 0-90.5l-176-176c-12-12-28.3-18.7-45.3-18.7H48C21.5 32 0 53.5 0 80zm112 32a32 32 0 1 1 0 64 32 32 0 1 1 0-64z" fill="#ffff33"/></svg></div><div style="position:absolute;left:1032.85px;top:544.7px"><svg width="16" height="18.3" viewBox="0 0 448 512" style="display:block" ><path d="M0 80V229.5c0 17 6.7 33.3 18.7 45.3l176 176c25 25 65.5 25 90.5 0L418.7 317.3c25-25 25-65.5 0-90.5l-176-176c-12-12-28.3-18.7-45.3-18.7H48C21.5 32 0 53.5 0 80zm112 32a32 32 0 1 1 0 64 32 32 0 1 1 0-64z" fill="#0022ff"/></svg></div><div style="position:absolute;left:1050.8999999999999px;top:544.7px"><svg width="16" height="18.3" viewBox="0 0 448 512" style="display:block" ><path d="M0 80V229.5c0 17 6.7 33.3 18.7 45.3l176 176c25 25 65.5 25 90.5 0L418.7 317.3c25-25 25-65.5 0-90.5l-176-176c-12-12-28.3-18.7-45.3-18.7H48C21.5 32 0 53.5 0 80zm112 32a32 32 0 1 1 0 64 32 32 0 1 1 0-64z" fill="#283593"/></svg></div><svg width="4" height="14" viewBox="0 0 4 14" style="position:absolute;left:1484px;top:547.0px">
<circle cx="2" cy="2" r="1.35" fill="#111"/><circle cx="2" cy="7.1" r="1.35" fill="#111"/><circle cx="2" cy="12.2" r="1.35" fill="#111"/></svg><div style="position:absolute;left:115px;top:577px;width:1396px;height:46px;background:#f4f4f4"></div><div style="position:absolute;left:127.5px;top:592.3px;width:15.5px;height:15.5px;box-sizing:border-box;border:2px solid #111;border-radius:2.5px"></div><div style="position:absolute;left:165px;top:591.5px;font-size:17px;line-height:1;color:#1e1e1e;font-weight:normal;white-space:nowrap;letter-spacing:0.08px">Eliáš, Michal</div><div style="position:absolute;left:465px;top:585.5px;width:29px;height:29px;background:#041a85;border-radius:50%"><div style="font-size:16px;line-height:29px;text-align:center;color:#fff;font-weight:bold"></div></div><div style="position:absolute;left:586px;top:591.5px;font-size:17px;line-height:1;color:#1e1e1e;font-weight:normal;white-space:nowrap;width:64px;text-align:center;letter-spacing:0.1px">− 5 měs</div><div style="position:absolute;left:690.5px;top:585.5px;width:29px;height:29px;background:#6086a3;border-radius:50%"><div style="font-size:16px;line-height:31px;text-align:center;color:#fff;font-weight:bold">Ú</div></div><div style="position:absolute;left:752px;top:591.5px;font-size:17px;line-height:1;color:#1e1e1e;font-weight:normal;white-space:nowrap;width:80px;text-align:center;letter-spacing:0.1px">+ 979 r</div><div style="position:absolute;left:865px;top:593.5px"><svg width="16" height="16" viewBox="0 0 512 512" style="display:block" ><path d="M164.9 24.6c-7.7-18.6-28-28.5-47.4-23.2l-88 24C12.1 30.2 0 46 0 64C0 311.4 200.6 512 448 512c18 0 33.8-12.1 38.6-29.5l24-88c5.3-19.4-4.6-39.7-23.2-47.4l-96-40c-16.3-6.8-35.2-2.1-46.3 11.6L304.7 368C234.3 334.7 177.3 277.7 144 207.3L193.3 167c13.7-11.2 18.4-30 11.6-46.3l-40-96z" fill="#a8a8a8"/></svg></div><div style="position:absolute;left:1014.8px;top:590.7px"><svg width="16" height="18.3" viewBox="0 0 448 512" style="display:block" ><path d="M0 80V229.5c0 17 6.7 33.3 18.7 45.3l176 176c25 25 65.5 25 90.5 0L418.7 317.3c25-25 25-65.5 0-90.5l-176-176c-12-12-28.3-18.7-45.3-18.7H48C21.5 32 0 53.5 0 80zm112 32a32 32 0 1 1 0 64 32 32 0 1 1 0-64z" fill="#ffc933"/></svg></div><div style="position:absolute;left:1032.85px;top:590.7px"><svg width="16" height="18.3" viewBox="0 0 448 512" style="display:block" ><path d="M0 80V229.5c0 17 6.7 33.3 18.7 45.3l176 176c25 25 65.5 25 90.5 0L418.7 317.3c25-25 25-65.5 0-90.5l-176-176c-12-12-28.3-18.7-45.3-18.7H48C21.5 32 0 53.5 0 80zm112 32a32 32 0 1 1 0 64 32 32 0 1 1 0-64z" fill="#ffff33"/></svg></div><div style="position:absolute;left:1050.8999999999999px;top:590.7px"><svg width="16" height="18.3" viewBox="0 0 448 512" style="display:block" ><path d="M0 80V229.5c0 17 6.7 33.3 18.7 45.3l176 176c25 25 65.5 25 90.5 0L418.7 317.3c25-25 25-65.5 0-90.5l-176-176c-12-12-28.3-18.7-45.3-18.7H48C21.5 32 0 53.5 0 80zm112 32a32 32 0 1 1 0 64 32 32 0 1 1 0-64z" fill="#993300"/></svg></div><div style="position:absolute;left:1068.95px;top:590.7px"><svg width="16" height="18.3" viewBox="0 0 448 512" style="display:block" ><path d="M0 80V229.5c0 17 6.7 33.3 18.7 45.3l176 176c25 25 65.5 25 90.5 0L418.7 317.3c25-25 25-65.5 0-90.5l-176-176c-12-12-28.3-18.7-45.3-18.7H48C21.5 32 0 53.5 0 80zm112 32a32 32 0 1 1 0 64 32 32 0 1 1 0-64z" fill="#ff19ff"/></svg></div><div style="position:absolute;left:1087.0px;top:590.7px"><svg width="16" height="18.3" viewBox="0 0 448 512" style="display:block" ><path d="M0 80V229.5c0 17 6.7 33.3 18.7 45.3l176 176c25 25 65.5 25 90.5 0L418.7 317.3c25-25 25-65.5 0-90.5l-176-176c-12-12-28.3-18.7-45.3-18.7H48C21.5 32 0 53.5 0 80zm112 32a32 32 0 1 1 0 64 32 32 0 1 1 0-64z" fill="#0022ff"/></svg></div><div style="position:absolute;left:1105.05px;top:590.7px"><svg width="16" height="18.3" viewBox="0 0 448 512" style="display:block" ><path d="M0 80V229.5c0 17 6.7 33.3 18.7 45.3l176 176c25 25 65.5 25 90.5 0L418.7 317.3c25-25 25-65.5 0-90.5l-176-176c-12-12-28.3-18.7-45.3-18.7H48C21.5 32 0 53.5 0 80zm112 32a32 32 0 1 1 0 64 32 32 0 1 1 0-64z" fill="#00ff33"/></svg></div><svg width="4" height="14" viewBox="0 0 4 14" style="position:absolute;left:1484px;top:593.0px">
<circle cx="2" cy="2" r="1.35" fill="#111"/><circle cx="2" cy="7.1" r="1.35" fill="#111"/><circle cx="2" cy="12.2" r="1.35" fill="#111"/></svg><div style="position:absolute;left:115px;top:623px;width:1396px;height:46px;background:#ffffff"></div><div style="position:absolute;left:127.5px;top:638.3px;width:15.5px;height:15.5px;box-sizing:border-box;border:2px solid #111;border-radius:2.5px"></div><div style="position:absolute;left:165px;top:637.5px;font-size:17px;line-height:1;color:#1e1e1e;font-weight:normal;white-space:nowrap;letter-spacing:0.08px">Eliška, Nová</div><div style="position:absolute;left:465px;top:631.5px;width:29px;height:29px;background:#ff8a1f;border-radius:50%"><div style="font-size:16px;line-height:29px;text-align:center;color:#fff;font-weight:bold">S</div></div><div style="position:absolute;left:586px;top:637.5px;font-size:17px;line-height:1;color:#1e1e1e;font-weight:normal;white-space:nowrap;width:64px;text-align:center;letter-spacing:0.1px">− 5 měs</div><div style="position:absolute;left:690.5px;top:631.5px;width:29px;height:29px;background:#6086a3;border-radius:50%"><div style="font-size:16px;line-height:31px;text-align:center;color:#fff;font-weight:bold">Ú</div></div><div style="position:absolute;left:752px;top:637.5px;font-size:17px;line-height:1;color:#1e1e1e;font-weight:normal;white-space:nowrap;width:80px;text-align:center;letter-spacing:0.1px">+ 979 r</div><div style="position:absolute;left:865px;top:639.5px"><svg width="16" height="16" viewBox="0 0 512 512" style="display:block" ><path d="M164.9 24.6c-7.7-18.6-28-28.5-47.4-23.2l-88 24C12.1 30.2 0 46 0 64C0 311.4 200.6 512 448 512c18 0 33.8-12.1 38.6-29.5l24-88c5.3-19.4-4.6-39.7-23.2-47.4l-96-40c-16.3-6.8-35.2-2.1-46.3 11.6L304.7 368C234.3 334.7 177.3 277.7 144 207.3L193.3 167c13.7-11.2 18.4-30 11.6-46.3l-40-96z" fill="#a8a8a8"/></svg></div><div style="position:absolute;left:980px;top:638.4px"><svg width="13.5" height="16" viewBox="0 0 448 512" style="display:block" ><path d="M352 224c53 0 96-43 96-96s-43-96-96-96s-96 43-96 96c0 4 .2 8 .7 11.9l-94.1 47C145.4 170.2 121.9 160 96 160c-53 0-96 43-96 96s43 96 96 96c25.9 0 49.4-10.2 66.6-26.9l94.1 47c-.5 3.9-.7 7.8-.7 11.9c0 53 43 96 96 96s96-43 96-96s-43-96-96-96c-25.9 0-49.4 10.2-66.6 26.9l-94.1-47c.5-3.9 .7-7.8 .7-11.9s-.2-8-.7-11.9l94.1-47C302.6 213.8 326.1 224 352 224z" fill="#2d2a6b"/></svg></div><div style="position:absolute;left:1014.8px;top:636.7px"><svg width="16" height="18.3" viewBox="0 0 448 512" style="display:block" ><path d="M0 80V229.5c0 17 6.7 33.3 18.7 45.3l176 176c25 25 65.5 25 90.5 0L418.7 317.3c25-25 25-65.5 0-90.5l-176-176c-12-12-28.3-18.7-45.3-18.7H48C21.5 32 0 53.5 0 80zm112 32a32 32 0 1 1 0 64 32 32 0 1 1 0-64z" fill="#993300"/></svg></div><div style="position:absolute;left:1032.85px;top:636.7px"><svg width="16" height="18.3" viewBox="0 0 448 512" style="display:block" ><path d="M0 80V229.5c0 17 6.7 33.3 18.7 45.3l176 176c25 25 65.5 25 90.5 0L418.7 317.3c25-25 25-65.5 0-90.5l-176-176c-12-12-28.3-18.7-45.3-18.7H48C21.5 32 0 53.5 0 80zm112 32a32 32 0 1 1 0 64 32 32 0 1 1 0-64z" fill="#ff19ff"/></svg></div><svg width="4" height="14" viewBox="0 0 4 14" style="position:absolute;left:1484px;top:639.0px">
<circle cx="2" cy="2" r="1.35" fill="#111"/><circle cx="2" cy="7.1" r="1.35" fill="#111"/><circle cx="2" cy="12.2" r="1.35" fill="#111"/></svg><div style="position:absolute;left:115px;top:669px;width:1396px;height:46px;background:#f4f4f4"></div><div style="position:absolute;left:127.5px;top:684.3px;width:15.5px;height:15.5px;box-sizing:border-box;border:2px solid #111;border-radius:2.5px"></div><div style="position:absolute;left:165px;top:683.5px;font-size:17px;line-height:1;color:#1e1e1e;font-weight:normal;white-space:nowrap;letter-spacing:0.08px">Farská, Lenka</div><div style="position:absolute;left:465px;top:677.5px;width:29px;height:29px;background:#ff8a1f;border-radius:50%"><div style="font-size:16px;line-height:29px;text-align:center;color:#fff;font-weight:bold">S</div></div><div style="position:absolute;left:586px;top:683.5px;font-size:17px;line-height:1;color:#1e1e1e;font-weight:normal;white-space:nowrap;width:64px;text-align:center;letter-spacing:0.1px">− 5 měs</div><div style="position:absolute;left:789px;top:691px;width:6.6px;height:2px;background:#4a4a4a"></div><div style="position:absolute;left:865px;top:685.5px"><svg width="16" height="16" viewBox="0 0 512 512" style="display:block" ><path d="M164.9 24.6c-7.7-18.6-28-28.5-47.4-23.2l-88 24C12.1 30.2 0 46 0 64C0 311.4 200.6 512 448 512c18 0 33.8-12.1 38.6-29.5l24-88c5.3-19.4-4.6-39.7-23.2-47.4l-96-40c-16.3-6.8-35.2-2.1-46.3 11.6L304.7 368C234.3 334.7 177.3 277.7 144 207.3L193.3 167c13.7-11.2 18.4-30 11.6-46.3l-40-96z" fill="#a8a8a8"/></svg></div><svg width="16" height="12" viewBox="0 0 16 12" style="position:absolute;left:915px;top:688.0px">
<rect x="0" y="0" width="16" height="12" rx="1.6" fill="#a8a8a8"/><path d="M0.5 2.5 L8 7.8 L15.5 2.5" fill="none" stroke="#fff" stroke-width="1.1"/></svg><div style="position:absolute;left:1014.8px;top:682.7px"><svg width="16" height="18.3" viewBox="0 0 448 512" style="display:block" ><path d="M0 80V229.5c0 17 6.7 33.3 18.7 45.3l176 176c25 25 65.5 25 90.5 0L418.7 317.3c25-25 25-65.5 0-90.5l-176-176c-12-12-28.3-18.7-45.3-18.7H48C21.5 32 0 53.5 0 80zm112 32a32 32 0 1 1 0 64 32 32 0 1 1 0-64z" fill="#ffff33"/></svg></div><div style="position:absolute;left:1032.85px;top:682.7px"><svg width="16" height="18.3" viewBox="0 0 448 512" style="display:block" ><path d="M0 80V229.5c0 17 6.7 33.3 18.7 45.3l176 176c25 25 65.5 25 90.5 0L418.7 317.3c25-25 25-65.5 0-90.5l-176-176c-12-12-28.3-18.7-45.3-18.7H48C21.5 32 0 53.5 0 80zm112 32a32 32 0 1 1 0 64 32 32 0 1 1 0-64z" fill="#283593"/></svg></div><svg width="4" height="14" viewBox="0 0 4 14" style="position:absolute;left:1484px;top:685.0px">
<circle cx="2" cy="2" r="1.35" fill="#111"/><circle cx="2" cy="7.1" r="1.35" fill="#111"/><circle cx="2" cy="12.2" r="1.35" fill="#111"/></svg><div style="position:absolute;left:115px;top:715px;width:1396px;height:46px;background:#ffffff"></div><div style="position:absolute;left:127.5px;top:730.3px;width:15.5px;height:15.5px;box-sizing:border-box;border:2px solid #111;border-radius:2.5px"></div><div style="position:absolute;left:165px;top:729.5px;font-size:17px;line-height:1;color:#1e1e1e;font-weight:normal;white-space:nowrap;letter-spacing:0.08px">Fraňková, Julie</div><div style="position:absolute;left:465px;top:723.5px;width:29px;height:29px;background:#9234c8;border-radius:50%"><div style="font-size:16px;line-height:29px;text-align:center;color:#fff;font-weight:bold">S</div></div><div style="position:absolute;left:586px;top:729.5px;font-size:17px;line-height:1;color:#1e1e1e;font-weight:normal;white-space:nowrap;width:64px;text-align:center;letter-spacing:0.1px">− 5 měs</div><div style="position:absolute;left:789px;top:737px;width:6.6px;height:2px;background:#4a4a4a"></div><div style="position:absolute;left:865px;top:731.5px"><svg width="16" height="16" viewBox="0 0 512 512" style="display:block" ><path d="M164.9 24.6c-7.7-18.6-28-28.5-47.4-23.2l-88 24C12.1 30.2 0 46 0 64C0 311.4 200.6 512 448 512c18 0 33.8-12.1 38.6-29.5l24-88c5.3-19.4-4.6-39.7-23.2-47.4l-96-40c-16.3-6.8-35.2-2.1-46.3 11.6L304.7 368C234.3 334.7 177.3 277.7 144 207.3L193.3 167c13.7-11.2 18.4-30 11.6-46.3l-40-96z" fill="#a8a8a8"/></svg></div><svg width="16" height="12" viewBox="0 0 16 12" style="position:absolute;left:915px;top:734.0px">
<rect x="0" y="0" width="16" height="12" rx="1.6" fill="#a8a8a8"/><path d="M0.5 2.5 L8 7.8 L15.5 2.5" fill="none" stroke="#fff" stroke-width="1.1"/></svg><div style="position:absolute;left:1014.8px;top:728.7px"><svg width="16" height="18.3" viewBox="0 0 448 512" style="display:block" ><path d="M0 80V229.5c0 17 6.7 33.3 18.7 45.3l176 176c25 25 65.5 25 90.5 0L418.7 317.3c25-25 25-65.5 0-90.5l-176-176c-12-12-28.3-18.7-45.3-18.7H48C21.5 32 0 53.5 0 80zm112 32a32 32 0 1 1 0 64 32 32 0 1 1 0-64z" fill="#ffc933"/></svg></div><div style="position:absolute;left:1032.85px;top:728.7px"><svg width="16" height="18.3" viewBox="0 0 448 512" style="display:block" ><path d="M0 80V229.5c0 17 6.7 33.3 18.7 45.3l176 176c25 25 65.5 25 90.5 0L418.7 317.3c25-25 25-65.5 0-90.5l-176-176c-12-12-28.3-18.7-45.3-18.7H48C21.5 32 0 53.5 0 80zm112 32a32 32 0 1 1 0 64 32 32 0 1 1 0-64z" fill="#ffff33"/></svg></div><div style="position:absolute;left:1050.8999999999999px;top:728.7px"><svg width="16" height="18.3" viewBox="0 0 448 512" style="display:block" ><path d="M0 80V229.5c0 17 6.7 33.3 18.7 45.3l176 176c25 25 65.5 25 90.5 0L418.7 317.3c25-25 25-65.5 0-90.5l-176-176c-12-12-28.3-18.7-45.3-18.7H48C21.5 32 0 53.5 0 80zm112 32a32 32 0 1 1 0 64 32 32 0 1 1 0-64z" fill="#283593"/></svg></div><div style="position:absolute;left:1068.95px;top:728.7px"><svg width="16" height="18.3" viewBox="0 0 448 512" style="display:block" ><path d="M0 80V229.5c0 17 6.7 33.3 18.7 45.3l176 176c25 25 65.5 25 90.5 0L418.7 317.3c25-25 25-65.5 0-90.5l-176-176c-12-12-28.3-18.7-45.3-18.7H48C21.5 32 0 53.5 0 80zm112 32a32 32 0 1 1 0 64 32 32 0 1 1 0-64z" fill="#00ff33"/></svg></div><svg width="4" height="14" viewBox="0 0 4 14" style="position:absolute;left:1484px;top:731.0px">
<circle cx="2" cy="2" r="1.35" fill="#111"/><circle cx="2" cy="7.1" r="1.35" fill="#111"/><circle cx="2" cy="12.2" r="1.35" fill="#111"/></svg><div style="position:absolute;left:115px;top:761px;width:1396px;height:45px;background:#f4f4f4"></div><div style="position:absolute;left:127.5px;top:775.8px;width:15.5px;height:15.5px;box-sizing:border-box;border:2px solid #111;border-radius:2.5px"></div><div style="position:absolute;left:165px;top:775.0px;font-size:17px;line-height:1;color:#1e1e1e;font-weight:normal;white-space:nowrap;letter-spacing:0.08px">Hálek, Tomáš</div><div style="position:absolute;left:465px;top:769.0px;width:29px;height:29px;background:#ff8a1f;border-radius:50%"><div style="font-size:16px;line-height:29px;text-align:center;color:#fff;font-weight:bold">S</div></div><div style="position:absolute;left:586px;top:775.0px;font-size:17px;line-height:1;color:#1e1e1e;font-weight:normal;white-space:nowrap;width:64px;text-align:center;letter-spacing:0.1px">− 5 měs</div><div style="position:absolute;left:789px;top:783px;width:6.6px;height:2px;background:#4a4a4a"></div><div style="position:absolute;left:865px;top:777.0px"><svg width="16" height="16" viewBox="0 0 512 512" style="display:block" ><path d="M164.9 24.6c-7.7-18.6-28-28.5-47.4-23.2l-88 24C12.1 30.2 0 46 0 64C0 311.4 200.6 512 448 512c18 0 33.8-12.1 38.6-29.5l24-88c5.3-19.4-4.6-39.7-23.2-47.4l-96-40c-16.3-6.8-35.2-2.1-46.3 11.6L304.7 368C234.3 334.7 177.3 277.7 144 207.3L193.3 167c13.7-11.2 18.4-30 11.6-46.3l-40-96z" fill="#a8a8a8"/></svg></div><svg width="16" height="12" viewBox="0 0 16 12" style="position:absolute;left:915px;top:779.5px">
<rect x="0" y="0" width="16" height="12" rx="1.6" fill="#a8a8a8"/><path d="M0.5 2.5 L8 7.8 L15.5 2.5" fill="none" stroke="#fff" stroke-width="1.1"/></svg><div style="position:absolute;left:1014.8px;top:774.2px"><svg width="16" height="18.3" viewBox="0 0 448 512" style="display:block" ><path d="M0 80V229.5c0 17 6.7 33.3 18.7 45.3l176 176c25 25 65.5 25 90.5 0L418.7 317.3c25-25 25-65.5 0-90.5l-176-176c-12-12-28.3-18.7-45.3-18.7H48C21.5 32 0 53.5 0 80zm112 32a32 32 0 1 1 0 64 32 32 0 1 1 0-64z" fill="#ffff33"/></svg></div><svg width="4" height="14" viewBox="0 0 4 14" style="position:absolute;left:1484px;top:776.5px">
<circle cx="2" cy="2" r="1.35" fill="#111"/><circle cx="2" cy="7.1" r="1.35" fill="#111"/><circle cx="2" cy="12.2" r="1.35" fill="#111"/></svg><svg width="14" height="14" viewBox="0 0 14 14" style="position:absolute;left:130.3px;top:821.2px"><path d="M7 1.5 L1.8 7 L7 12.5 M12.5 1.5 L7.3 7 L12.5 12.5" fill="none" stroke="#d6d6d6" stroke-width="1.6"/></svg><svg width="10" height="14" viewBox="0 0 10 14" style="position:absolute;left:169.3px;top:821.2px"><path d="M8 1.5 L2.2 7 L8 12.5" fill="none" stroke="#d6d6d6" stroke-width="1.6"/></svg><div style="position:absolute;left:208px;top:822px;font-size:14.5px;line-height:1;color:#333;font-weight:normal;white-space:nowrap;">Strana</div><div style="position:absolute;left:259px;top:815px;width:36px;height:28px;box-sizing:border-box;border:1px solid #999;border-radius:4px"><div style="font-size:14px;line-height:26px;text-align:center;color:#333">1</div></div><div style="position:absolute;left:303px;top:822px;font-size:14.5px;line-height:1;color:#333;font-weight:normal;white-space:nowrap;">z 2</div><svg width="10" height="14" viewBox="0 0 10 14" style="position:absolute;left:352px;top:821.3px"><path d="M2 1.5 L8 7 L2 12.5" fill="none" stroke="#111" stroke-width="1.7"/></svg><svg width="15" height="14" viewBox="0 0 15 14" style="position:absolute;left:387px;top:821.3px"><path d="M1.5 1.5 L7 7 L1.5 12.5 M5.9 1.5 L11.4 7 L5.9 12.5" fill="none" stroke="#111" stroke-width="1.7"/></svg><svg width="14.5" height="14.5" viewBox="0 0 16 16" style="position:absolute;left:433.8px;top:821px">
<path d="M2 7 A6 6 0 0 1 13.2 4" fill="none" stroke="#111" stroke-width="1.8"/>
<path d="M14 9 A6 6 0 0 1 2.8 12" fill="none" stroke="#111" stroke-width="1.8"/>
<path d="M14.5 1 V6 H9.5 Z" fill="#111"/>
<path d="M1.5 15 V10 H6.5 Z" fill="#111"/>
</svg><div style="position:absolute;left:1452px;top:822px;font-size:14px;line-height:1;color:#333;font-weight:normal;white-space:nowrap;">Počet 57</div><svg width="240" height="70" viewBox="680 45 240 70" style="position:absolute;left:680px;top:45px;overflow:visible">
<defs><filter id="sh" x="-10%" y="-30%" width="120%" height="160%"><feGaussianBlur in="SourceAlpha" stdDeviation="1.5"/><feOffset dx="1.5" dy="2.5"/><feComponentTransfer><feFuncA type="linear" slope="0.7"/></feComponentTransfer><feMerge><feMergeNode/><feMergeNode in="SourceGraphic"/></feMerge></filter></defs>
<path d="M701.5 73 H872 L864 55 L909.5 80.5 L864 106.5 L872 90.5 H701.5 A8.75 8.75 0 0 1 701.5 73 Z" fill="#fd524f" filter="url(#sh)"/>
</svg><div style="position:absolute;left:910px;top:54px;width:231px;height:338px;box-sizing:border-box;background:#fff;border:1.5px solid #7a7a7a;border-radius:4px"></div><div style="position:absolute;left:911.5px;top:63px;width:228px;height:40px;background:#e8e8e8"></div><div style="position:absolute;left:927px;top:75px"><svg width="18" height="15" viewBox="0 0 640 512" style="display:block" ><path d="M96 128a128 128 0 1 1 256 0A128 128 0 1 1 96 128zM0 482.3C0 383.8 79.8 304 178.3 304h91.4C368.2 304 448 383.8 448 482.3c0 16.4-13.3 29.7-29.7 29.7H29.7C13.3 512 0 498.7 0 482.3zM504 312V248H440c-13.3 0-24-10.7-24-24s10.7-24 24-24h64V136c0-13.3 10.7-24 24-24s24 10.7 24 24v64h64c13.3 0 24 10.7 24 24s-10.7 24-24 24H552v64c0 13.3-10.7 24-24 24s-24-10.7-24-24z" fill="#2d2a6b"/></svg></div><div style="position:absolute;left:955px;top:76px;font-size:15.5px;line-height:1;color:#2d2a6b;font-weight:normal;white-space:nowrap;letter-spacing:0.15px">Přidat kontakt v detailu</div><div style="position:absolute;left:927px;top:115px"><svg width="18" height="15" viewBox="0 0 640 512" style="display:block" ><path d="M144 480C64.5 480 0 415.5 0 336c0-62.8 40.2-116.2 96.2-135.9c-.1-2.7-.2-5.4-.2-8.1c0-88.4 71.6-160 160-160c59.3 0 111 32.2 138.7 80.2C409.9 102 428.3 96 448 96c53 0 96 43 96 96c0 12.2-2.3 23.8-6.4 34.6C596 238.4 640 290.1 640 352c0 70.7-57.3 128-128 128H144zm79-217c-9.4 9.4-9.4 24.6 0 33.9s24.6 9.4 33.9 0l39-39V392c0 13.3 10.7 24 24 24s24-10.7 24-24V257.9l39 39c9.4 9.4 24.6 9.4 33.9 0s9.4-24.6 0-33.9l-80-80c-9.4-9.4-24.6-9.4-33.9 0l-80 80z" fill="#1e1e1e"/></svg></div><div style="position:absolute;left:955px;top:116px;font-size:15.5px;line-height:1;color:#1e1e1e;font-weight:normal;white-space:nowrap;letter-spacing:0.15px">Import</div><div style="position:absolute;left:929px;top:155.5px"><svg width="14" height="14" viewBox="0 0 512 512" style="display:block" ><path d="M0 96C0 60.7 28.7 32 64 32H448c35.3 0 64 28.7 64 64V416c0 35.3-28.7 64-64 64H64c-35.3 0-64-28.7-64-64V96zm64 64V416H224V160H64zm384 0H288V416H448V160z" fill="#1e1e1e"/></svg></div><div style="position:absolute;left:955px;top:156px;font-size:15.5px;line-height:1;color:#1e1e1e;font-weight:normal;white-space:nowrap;letter-spacing:0.15px">Pohledy</div><div style="position:absolute;left:929px;top:195px"><svg width="14" height="14" viewBox="0 0 512 512" style="display:block" ><path d="M176 56V96H336V56c0-4.4-3.6-8-8-8H184c-4.4 0-8 3.6-8 8zM128 96V56c0-30.9 25.1-56 56-56H328c30.9 0 56 25.1 56 56V96v32V480H128V128 96zM64 96H96V480H64c-35.3 0-64-28.7-64-64V160c0-35.3 28.7-64 64-64zM448 480H416V96h32c35.3 0 64 28.7 64 64V416c0 35.3-28.7 64-64 64z" fill="#1e1e1e"/></svg></div><div style="position:absolute;left:955px;top:196px;font-size:15.5px;line-height:1;color:#1e1e1e;font-weight:normal;white-space:nowrap;letter-spacing:0.15px">Půjčit</div><svg width="6" height="10" viewBox="0 0 6 10" style="position:absolute;left:1117px;top:198px"><path d="M0.5 0.5 L5.5 5 L0.5 9.5 Z" fill="#1e1e1e"/></svg><div style="position:absolute;left:930px;top:235px"><svg width="12" height="14" viewBox="0 0 448 512" style="display:block" ><path d="M352 224c53 0 96-43 96-96s-43-96-96-96s-96 43-96 96c0 4 .2 8 .7 11.9l-94.1 47C145.4 170.2 121.9 160 96 160c-53 0-96 43-96 96s43 96 96 96c25.9 0 49.4-10.2 66.6-26.9l94.1 47c-.5 3.9-.7 7.8-.7 11.9c0 53 43 96 96 96s96-43 96-96s-43-96-96-96c-25.9 0-49.4 10.2-66.6 26.9l-94.1-47c.5-3.9 .7-7.8 .7-11.9s-.2-8-.7-11.9l94.1-47C302.6 213.8 326.1 224 352 224z" fill="#1e1e1e"/></svg></div><div style="position:absolute;left:955px;top:236px;font-size:15.5px;line-height:1;color:#1e1e1e;font-weight:normal;white-space:nowrap;letter-spacing:0.15px">Sdílení</div><svg width="6" height="10" viewBox="0 0 6 10" style="position:absolute;left:1117px;top:238px"><path d="M0.5 0.5 L5.5 5 L0.5 9.5 Z" fill="#1e1e1e"/></svg><div style="position:absolute;left:929px;top:275px"><svg width="14" height="14" viewBox="0 0 512 512" style="display:block" ><path d="M190.5 68.8L225.3 128H224 152c-22.1 0-40-17.9-40-40s17.9-40 40-40h2.2c14.9 0 28.8 7.9 36.3 20.8zM64 88c0 14.4 3.5 28 9.6 40H32c-17.7 0-32 14.3-32 32v64c0 17.7 14.3 32 32 32H480c17.7 0 32-14.3 32-32V160c0-17.7-14.3-32-32-32H438.4c6.1-12 9.6-25.6 9.6-40c0-48.6-39.4-88-88-88h-2.2c-31.9 0-61.5 16.9-77.7 44.4L256 85.5l-24.1-41C215.7 16.9 186.1 0 154.2 0H152C103.4 0 64 39.4 64 88zm336 0c0 22.1-17.9 40-40 40H288h-1.3l34.8-59.2C329.1 55.900 342.9 48 357.8 48H360c22.1 0 40 17.9 40 40zM32 288V464c0 26.5 21.5 48 48 48H224V288H32zM288 512H432c26.5 0 48-21.5 48-48V288H288V512z" fill="#1e1e1e"/></svg></div><div style="position:absolute;left:955px;top:276px;font-size:15.5px;line-height:1;color:#1e1e1e;font-weight:normal;white-space:nowrap;letter-spacing:0.15px">Převod</div><div style="position:absolute;left:927px;top:315px"><svg width="18" height="15" viewBox="0 0 640 512" style="display:block" ><path d="M144 480C64.5 480 0 415.5 0 336c0-62.8 40.2-116.2 96.2-135.9c-.1-2.7-.2-5.4-.2-8.1c0-88.4 71.6-160 160-160c59.3 0 111 32.2 138.7 80.2C409.9 102 428.300 96 448 96c53 0 96 43 96 96c0 12.2-2.3 23.8-6.4 34.6C596 238.4 640 290.1 640 352c0 70.7-57.3 128-128 128H144zm79-167l80 80c9.4 9.4 24.6 9.4 33.9 0l80-80c9.4-9.4 9.4-24.6 0-33.9s-24.6-9.4-33.9 0l-39 39V184c0-13.3-10.7-24-24-24s-24 10.7-24 24V318.1l-39-39c-9.4-9.4-24.6-9.4-33.9 0s-9.4 24.6 0 33.9z" fill="#1e1e1e"/></svg></div><div style="position:absolute;left:955px;top:316px;font-size:15.5px;line-height:1;color:#1e1e1e;font-weight:normal;white-space:nowrap;letter-spacing:0.15px">Export</div><svg width="16" height="15" viewBox="0 0 16 15" style="position:absolute;left:928px;top:355px">
<g fill="none" stroke="#1e1e1e" stroke-width="1.5" stroke-linejoin="round">
<path d="M8 1 L11 2.2 V5.6 L8 6.8 L5 5.6 V2.2 Z"/><path d="M5 2.2 L8 3.4 L11 2.2 M8 3.4 V6.8"/>
<path d="M4.5 7.2 L7.5 8.4 V11.8 L4.5 13 L1.5 11.8 V8.4 Z"/><path d="M1.5 8.4 L4.5 9.6 L7.5 8.4 M4.5 9.6 V13"/>
<path d="M11.5 7.2 L14.5 8.4 V11.8 L11.5 13 L8.5 11.8 V8.4 Z"/><path d="M8.5 8.4 L11.5 9.6 L14.5 8.4 M11.5 9.6 V13"/>
</g></svg><div style="position:absolute;left:955px;top:356px;font-size:15.5px;line-height:1;color:#1e1e1e;font-weight:normal;white-space:nowrap;letter-spacing:0.15px">Hromadné změny</div>
</body></html>
